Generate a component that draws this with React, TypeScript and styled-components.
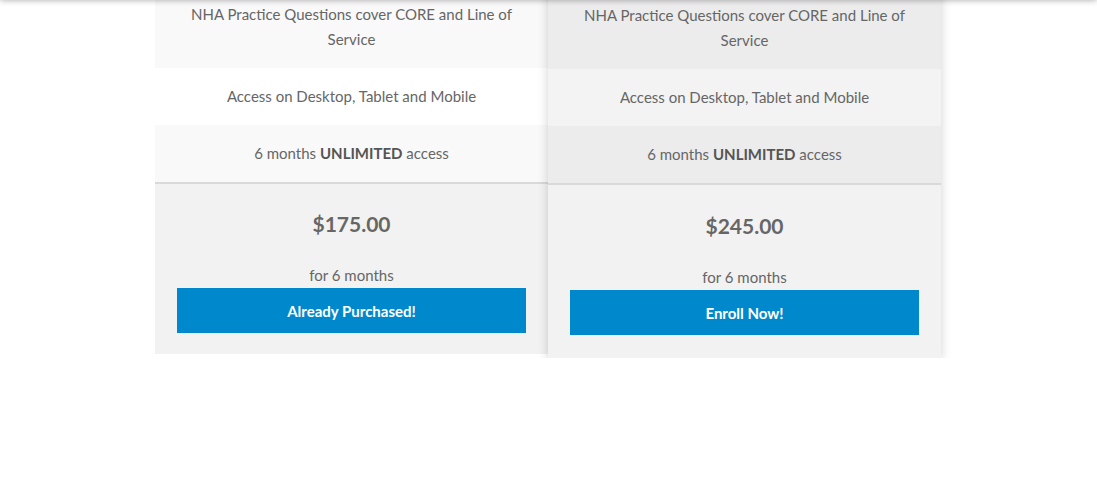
import React from "react";
import styled, { createGlobalStyle } from "styled-components";

const Global = createGlobalStyle`
  html, body { margin: 0; padding: 0; background: #ffffff; }
  body { font-family: "Source Sans Pro", Lato, "Liberation Sans", sans-serif; color: #666666; overflow: hidden; }
  * { box-sizing: border-box; }
`;

const HeaderShade = styled.div`
  position: fixed;
  top: -10px;
  left: 0;
  right: 0;
  height: 10px;
  box-shadow: 0 0 6px rgba(0, 0, 0, 0.35);
  z-index: 5;
`;

const Pricing = styled.section`
  width: 787px;
  margin: -14px auto 0;
  display: grid;
  grid-template-columns: 393px 393px;
  align-items: start;
`;

const Card = styled.div<{ $featured?: boolean }>`
  display: flex;
  flex-direction: column;
  margin-top: ${(p) => (p.$featured ? "1px" : "0")};
  box-shadow: ${(p) => (p.$featured ? "0 2px 10px rgba(0,0,0,0.18)" : "none")};
  position: relative;
  z-index: ${(p) => (p.$featured ? 1 : 0)};
`;

const Feature = styled.div<{ $alt: boolean; $featured?: boolean }>`
  padding: 16px 20px;
  text-align: center;
  font-size: 15px;
  line-height: 25px;
  color: #666666;
  background: ${(p) =>
    p.$featured ? (p.$alt ? "#f3f3f3" : "#ececec") : p.$alt ? "#ffffff" : "#f9f9f9"};
  strong { font-weight: 700; color: #555555; }
`;

const Footer = styled.div<{ $featured?: boolean }>`
  background: #f2f2f2;
  border-top: 2px solid #d9d9d9;
  padding: ${(p) => (p.$featured ? "26px 22px 23px" : "25px 22px 21px")};
  display: flex;
  flex-direction: column;
  align-items: center;
`;

const Price = styled.div`
  font-size: 21px;
  font-weight: 700;
  line-height: 30px;
  color: #666666;
`;

const Period = styled.div`
  margin-top: 26px;
  font-size: 15px;
  line-height: 20px;
  color: #666666;
`;

const Button = styled.button`
  margin-top: 3px;
  width: 100%;
  height: 45px;
  border: none;
  background: #0088cc;
  color: #ffffff;
  font-family: inherit;
  font-size: 15px;
  font-weight: 700;
  cursor: pointer;
`;

type Plan = { price: string; cta: string; featured?: boolean };

const plans: Plan[] = [
  { price: "$175.00", cta: "Already Purchased!" },
  { price: "$245.00", cta: "Enroll Now!", featured: true },
];

export default function App() {
  return (
    <>
      <Global />
      <HeaderShade />
      <Pricing>
        {plans.map((p) => (
          <Card key={p.price} $featured={p.featured}>
            <Feature $alt={false} $featured={p.featured}>
              NHA Practice Questions cover CORE and Line of Service
            </Feature>
            <Feature $alt={true} $featured={p.featured}>
              Access on Desktop, Tablet and Mobile
            </Feature>
            <Feature $alt={false} $featured={p.featured}>
              6 months <strong>UNLIMITED</strong> access
            </Feature>
            <Footer $featured={p.featured}>
              <Price>{p.price}</Price>
              <Period>for 6 months</Period>
              <Button>{p.cta}</Button>
            </Footer>
          </Card>
        ))}
      </Pricing>
    </>
  );
}
